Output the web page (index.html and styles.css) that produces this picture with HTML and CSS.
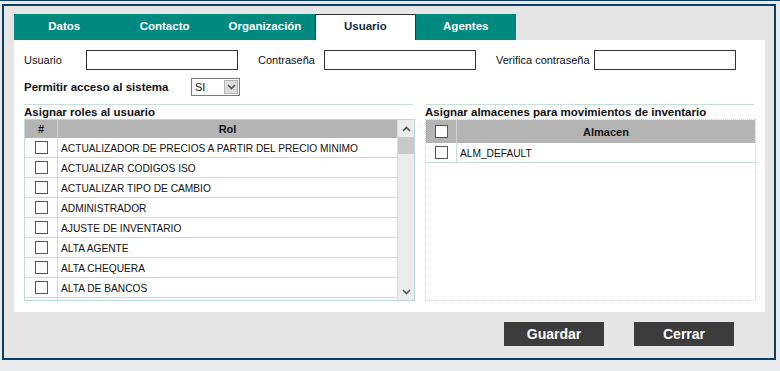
FILE: index.html
```html
<!DOCTYPE html>
<html>
<head>
    <title>Usuario</title>
    <link rel="stylesheet" href="styles.css">
</head>
<body>
<div id="frame">
    <div id="tabs">
        <a class="tab">Datos</a>
        <a class="tab">Contacto</a>
        <a class="tab">Organización</a>
        <a class="tab active">Usuario</a>
        <a class="tab">Agentes</a>
    </div>

    <div id="panel">
        <div class="form-row">
            <label class="lbl lbl-usuario">Usuario</label>
            <div class="input w152"></div>
            <label class="lbl lbl-pass">Contraseña</label>
            <div class="input w152"></div>
            <label class="lbl lbl-verif">Verifica contraseña</label>
            <div class="input w142"></div>
        </div>

        <div class="form-row row-acceso">
            <label class="lbl lbl-acceso">Permitir acceso al sistema</label>
            <div class="select">
                <span class="select-text">SI</span>
                <span class="select-btn">
                    <svg width="9" height="6" viewBox="0 0 9 6"><path d="M1 1 L4.5 4.5 L8 1" fill="none" stroke="#555" stroke-width="1.6"/></svg>
                </span>
            </div>
        </div>

        <div id="sections">
            <!-- Roles -->
            <div class="section sec-roles">
                <div class="sep"></div>
                <div class="sec-title">Asignar roles al usuario</div>
                <div class="grid grid-roles">
                    <div class="grid-body">
                        <div class="grid-head">
                            <div class="col-chk">#</div>
                            <div class="col-txt">Rol</div>
                        </div>
                        <div class="grid-row"><div class="col-chk"><span class="chk"></span></div><div class="col-txt left">ACTUALIZADOR DE PRECIOS A PARTIR DEL PRECIO MINIMO</div></div>
                        <div class="grid-row"><div class="col-chk"><span class="chk"></span></div><div class="col-txt left">ACTUALIZAR CODIGOS ISO</div></div>
                        <div class="grid-row"><div class="col-chk"><span class="chk"></span></div><div class="col-txt left">ACTUALIZAR TIPO DE CAMBIO</div></div>
                        <div class="grid-row"><div class="col-chk"><span class="chk"></span></div><div class="col-txt left">ADMINISTRADOR</div></div>
                        <div class="grid-row"><div class="col-chk"><span class="chk"></span></div><div class="col-txt left">AJUSTE DE INVENTARIO</div></div>
                        <div class="grid-row"><div class="col-chk"><span class="chk"></span></div><div class="col-txt left">ALTA AGENTE</div></div>
                        <div class="grid-row"><div class="col-chk"><span class="chk"></span></div><div class="col-txt left">ALTA CHEQUERA</div></div>
                        <div class="grid-row"><div class="col-chk"><span class="chk"></span></div><div class="col-txt left">ALTA DE BANCOS</div></div>
                        <div class="grid-row"><div class="col-chk"></div><div class="col-txt left"></div></div>
                    </div>
                    <div class="scrollbar">
                        <span class="arrow">
                            <svg width="9" height="6" viewBox="0 0 9 6"><path d="M1 5 L4.5 1.5 L8 5" fill="none" stroke="#555" stroke-width="1.6"/></svg>
                        </span>
                        <div class="track">
                            <div class="thumb"></div>
                        </div>
                        <span class="arrow">
                            <svg width="9" height="6" viewBox="0 0 9 6"><path d="M1 1 L4.5 4.5 L8 1" fill="none" stroke="#555" stroke-width="1.6"/></svg>
                        </span>
                    </div>
                </div>
            </div>

            <!-- Almacenes -->
            <div class="section sec-alm">
                <div class="sep"></div>
                <div class="sec-title">Asignar almacenes para movimientos de inventario</div>
                <div class="grid grid-alm">
                    <div class="grid-body">
                        <div class="grid-head head-alm">
                            <div class="col-chk narrow"><span class="chk"></span></div>
                            <div class="col-txt">Almacen</div>
                        </div>
                        <div class="grid-row"><div class="col-chk narrow"><span class="chk"></span></div><div class="col-txt left">ALM_DEFAULT</div></div>
                    </div>
                </div>
            </div>
        </div>
    </div>

    <div id="buttons">
        <button class="btn">Guardar</button>
        <button class="btn">Cerrar</button>
    </div>
</div>
</body>
</html>
```

FILE: styles.css
```css
body {
    font-family: "Liberation Sans", Arial, sans-serif;
    font-size: 11px;
    color: #111;
    background-color: #e9eaec;
    margin: 0;
    padding: 0;
    border-top: 1px solid #0c3f63;
}

/* Marco exterior */
#frame {
    width: 760px;
    height: 344px;
    margin: 3px 0 0 2px;
    border: 2px solid #0c3f63;
    background-color: #e6e6e6;
    padding: 8px 0 0 10px;
    display: flex;
    flex-direction: column;
}

/* Pestañas */
#tabs {
    display: flex;
    height: 26px;
}

.tab {
    width: 100.4px;
    display: flex;
    align-items: center;
    justify-content: center;
    background-color: #00897f;
    color: #fff;
    font-weight: bold;
    font-size: 11.5px;
    padding-bottom: 3px;
    box-sizing: border-box;
}

.tab.active {
    background-color: #fff;
    color: #1a2a3a;
    border: 1px solid #333;
    border-bottom: none;
}

/* Panel blanco */
#panel {
    width: 751px;
    height: 272px;
    background-color: #fff;
    padding: 10px 0 0 10px;
    box-sizing: border-box;
}

.form-row {
    display: flex;
    align-items: center;
    height: 20px;
}

.lbl {
    font-size: 11px;
    color: #111;
}

.lbl-usuario { width: 62px; }
.lbl-pass { width: 66px; margin-left: 20px; }
.lbl-verif { width: 98px; margin-left: 20px; }

.input {
    height: 20px;
    border: 1px solid #333;
    box-sizing: border-box;
    background: #fff;
}

.w152 { width: 152px; }
.w142 { width: 142px; }

.row-acceso {
    margin-top: 8px;
    height: 18px;
}

.lbl-acceso {
    width: 167px;
    font-weight: bold;
    font-size: 11.5px;
}

.select {
    width: 49px;
    height: 18px;
    border: 1px solid #7a7a7a;
    box-sizing: border-box;
    display: flex;
    align-items: center;
    justify-content: space-between;
}

.select-text {
    padding-left: 3px;
    font-size: 11px;
}

.select-btn {
    width: 14px;
    height: 14px;
    margin-right: 1px;
    background-color: #dcdcdc;
    border: 1px solid #b5b5b5;
    box-sizing: border-box;
    display: flex;
    align-items: center;
    justify-content: center;
}

/* Secciones inferiores */
#sections {
    display: flex;
    margin-top: 8px;
}

.sec-roles { width: 391px; }
.sec-alm { width: 331px; margin-left: 10px; }

.sep {
    height: 1px;
    background-color: #c4dfdc;
    margin-right: 2px;
}

.sec-alm .sep { margin-left: 1px; }

.sec-title {
    height: 14px;
    line-height: 14px;
    font-weight: bold;
    font-size: 11.5px;
    color: #111;
}

.grid {
    height: 182px;
    border: 1px solid #bcdad7;
    box-sizing: border-box;
    display: flex;
}

.grid-alm {
    border-style: dotted;
}

.grid-body {
    flex: 1;
    overflow: hidden;
}

.grid-head {
    display: flex;
    height: 18px;
    background-color: #b4b4b4;
    font-weight: bold;
    font-size: 11px;
}

.head-alm {
    height: 23px;
}

.grid-head .col-chk {
    border-right: 1px solid #cfcfcf;
}

.grid-row {
    display: flex;
    height: 20px;
    border-bottom: 1px solid #c4dfdc;
    box-sizing: border-box;
}

.col-chk {
    width: 33px;
    display: flex;
    align-items: center;
    justify-content: center;
    border-right: 1px solid #c4dfdc;
    box-sizing: border-box;
}

.col-chk.narrow { width: 31px; }

.col-txt {
    flex: 1;
    display: flex;
    align-items: center;
    justify-content: center;
}

.col-txt.left {
    justify-content: flex-start;
    padding: 2px 0 0 3px;
    font-size: 10.2px;
    white-space: nowrap;
}

.chk {
    width: 13px;
    height: 13px;
    border: 1px solid #555;
    box-sizing: border-box;
    background: #fff;
}

/* Barra de desplazamiento */
.scrollbar {
    width: 17px;
    background-color: #ececec;
    border-left: 1px solid #dcdcdc;
    display: flex;
    flex-direction: column;
    box-sizing: border-box;
}

.arrow {
    height: 17px;
    display: flex;
    align-items: center;
    justify-content: center;
}

.track {
    flex: 1;
}

.thumb {
    height: 17px;
    background-color: #c9c9c9;
}

/* Botones */
#buttons {
    display: flex;
    justify-content: flex-end;
    margin-top: 10px;
    padding-right: 40px;
}

.btn {
    width: 100px;
    height: 24px;
    margin-left: 30px;
    background-color: #3c3c3c;
    color: #fff;
    border: none;
    font-family: "Liberation Sans", Arial, sans-serif;
    font-weight: bold;
    font-size: 14px;
    padding: 0;
}
```
